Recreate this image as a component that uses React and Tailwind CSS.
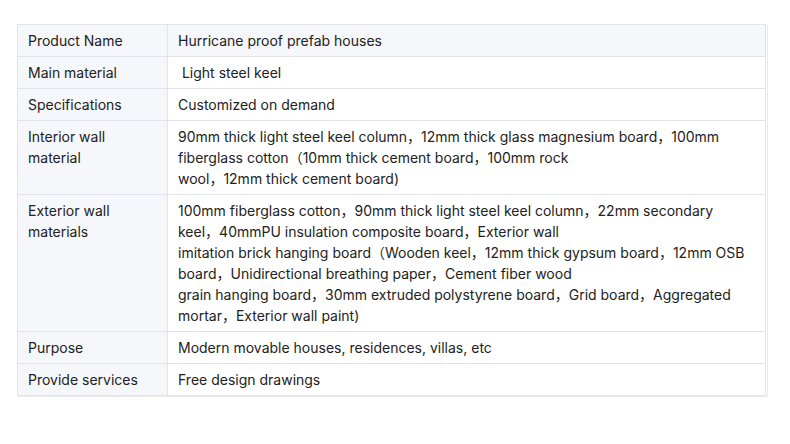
import React from "react";

const rows = [
  { k: ["Product Name"], v: ["Hurricane proof prefab houses"], head: true },
  { k: ["Main material"], v: ["\u00a0Light steel keel"] },
  { k: ["Specifications"], v: ["Customized on demand"] },
  {
    k: ["Interior wall material"],
    v: [
      "90mm thick light steel keel column，12mm thick glass magnesium board，100mm",
      "fiberglass cotton（10mm thick cement board，100mm rock",
      "wool，12mm thick cement board)",
    ],
  },
  {
    k: ["Exterior wall materials"],
    v: [
      "100mm fiberglass cotton，90mm thick light steel keel column，22mm secondary",
      "keel，40mmPU insulation composite board，Exterior wall",
      "imitation brick hanging board（Wooden keel，12mm thick gypsum board，12mm OSB",
      "board，Unidirectional breathing paper，Cement fiber wood",
      "grain hanging board，30mm extruded polystyrene board，Grid board，Aggregated",
      "mortar，Exterior wall paint)",
    ],
  },
  { k: ["Purpose"], v: ["Modern movable houses, residences, villas, etc"] },
  { k: ["Provide services"], v: ["Free design drawings"] },
];

export default function App() {
  return (
    <div
      className="w-[790px] h-[444px] bg-white pt-[24px] pl-[17px]"
      style={{ fontFamily: "Inter, 'Noto Sans CJK SC', sans-serif" }}
    >
      <div className="w-[750px] shadow-[1px_1px_0_#ebebeb]">
        <table className="w-[749px] border-collapse text-[14px] leading-[21px] text-[#222]">
          <tbody>
            {rows.map((r, i) => (
              <tr key={i}>
                <td className="w-[150px] align-top border border-[#e1e4ea] bg-[#f5f7fa] px-[10px] py-[5px]">
                  {r.k.join(" ")}
                </td>
                <td
                  className={
                    "align-top border border-[#e1e4ea] px-[10px] py-[5px] whitespace-nowrap " +
                    (r.head ? "bg-[#f5f7fa]" : "bg-white")
                  }
                >
                  {r.v.map((line, j) => (
                    <div key={j}>{line}</div>
                  ))}
                </td>
              </tr>
            ))}
          </tbody>
        </table>
      </div>
    </div>
  );
}
